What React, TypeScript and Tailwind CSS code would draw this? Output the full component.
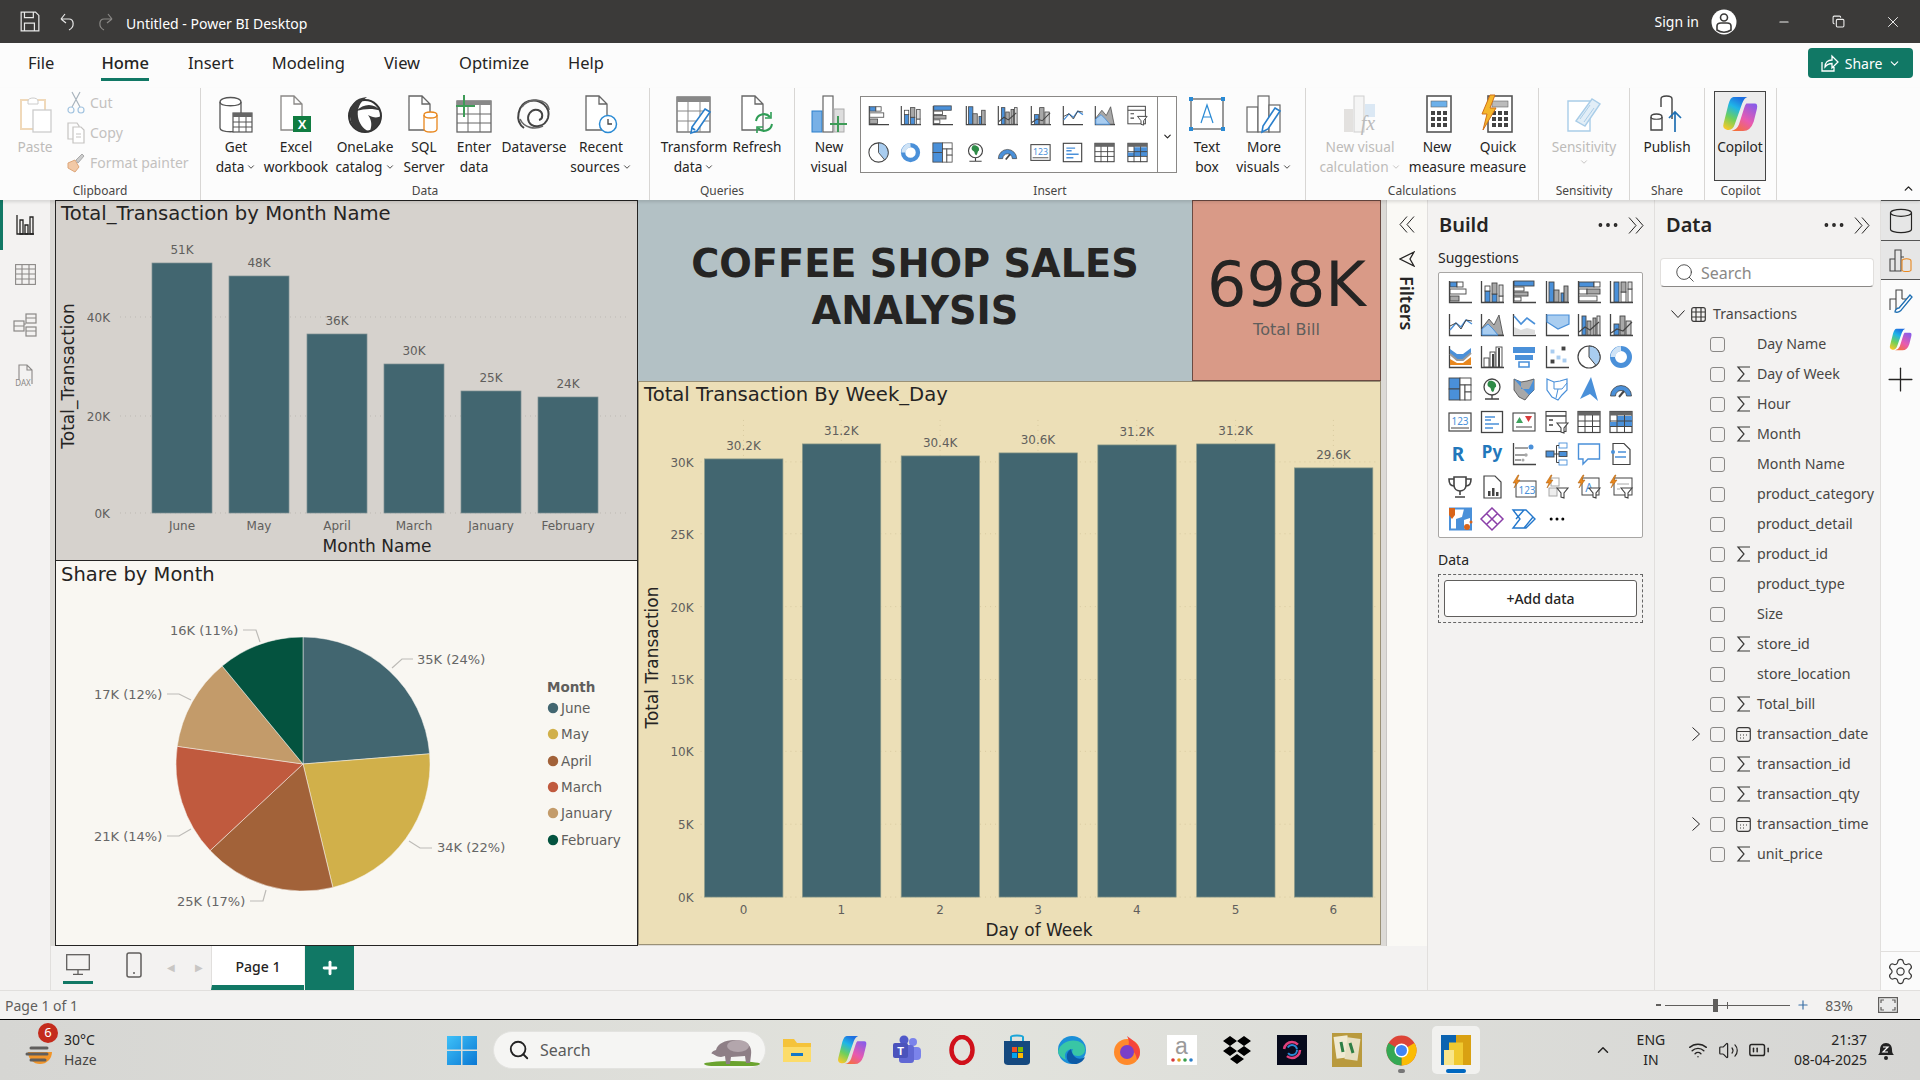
import React from 'react';
import { ChevronDown, ChevronUp, Search, Settings, Plus, Minus, Wifi, Volume2, BatteryMedium, X, Copy as CopyIcon, MoreHorizontal, Cylinder } from 'lucide-react';

const BL = '#4a90d9';
const LB = '#a9cdf0';
const DK = '#444444';
const GR = '#a8a8a8';
const OR = '#e8871e';

type P = { children?: React.ReactNode; w?: number; h?: number; vb?: string; className?: string };
function Ic({ children, w = 36, h = 38, vb, className }: P) {
  return (
    <svg width={w} height={h} viewBox={vb ?? `0 0 ${w} ${h}`} fill="none" className={`overflow-visible ${className ?? ''}`}>
      {children}
    </svg>
  );
}

const r = (x: number, y: number, w: number, h: number, f: string = BL, s: string = DK) => (
  <rect x={x} y={y} width={w} height={h} fill={f} stroke={s} strokeWidth=".9" />
);
const ax = <path d="M1.5 1v21.5H24" stroke={DK} strokeWidth="1.3" />;
const bolt = <path d="M6 0 1 8h3L2 13l6-8H5l2-5z" fill={OR} stroke="#a85f10" strokeWidth=".5" />;
const funnel = <path d="M12 13h11l-4 5v5l-3-1v-4z" fill="#fff" stroke={DK} strokeWidth="1.1" />;

const stBar = <>{ax}{r(2, 2, 7, 5)}{r(9, 2, 6, 5, '#fff')}{r(2, 9, 16, 5, '#fff')}{r(2, 16, 9, 5, GR)}</>;
const stCol = <>{ax}{r(5, 11, 5, 11)}{r(5, 6, 5, 5, '#fff')}{r(12, 14, 5, 8)}{r(12, 3, 5, 11, GR)}{r(19, 16, 4, 6, '#fff')}{r(19, 5, 4, 11, '#ddd')}</>;
const clBar = <>{ax}{r(2, 1, 20, 5)}{r(2, 7, 10, 4, '#fff')}{r(2, 12, 14, 4, GR)}{r(2, 17, 7, 4, '#fff')}</>;
const clCol = <>{ax}{r(4, 2, 5, 20)}{r(9, 10, 5, 12, GR)}{r(16, 13, 3, 9)}{r(19, 6, 4, 16, GR)}</>;
const pcBar = <>{ax}{r(2, 2, 15, 5)}{r(17, 2, 6, 5, '#fff')}{r(2, 9, 8, 5, '#fff')}{r(10, 9, 13, 5, GR)}{r(2, 16, 18, 5, '#fff')}</>;
const pcCol = <>{ax}{r(5, 2, 5, 20)}{r(12, 12, 5, 10, '#fff')}{r(12, 2, 5, 10, GR)}{r(19, 9, 4, 13, '#fff')}{r(19, 2, 4, 7, '#ddd')}</>;
const line = <>{ax}<path d="M2 17l6-7 5 4 5-7 6 4" stroke={BL} strokeWidth="1.4" /><path d="M2 13l6-3 5 6 5-9 6 1" stroke={DK} strokeWidth="1" /></>;
const area = <>{ax}<path d="M2 22V15l7-9 5 6 5-10 4 20z" fill={GR} stroke={DK} strokeWidth=".8" /><path d="M2 22V16l6-5 5 5 5 6z" fill={LB} stroke={BL} strokeWidth="1" /></>;
const stArea = <>{ax}<path d="M2 22V4l7 8 6-6 8 7v9z" fill="#fff" /><path d="M2 3l7 8 6-6 8 6" stroke={BL} strokeWidth="1.6" /><path d="M2 22V14l7 3 6-2 8 2v5z" fill="#ddd" /></>;
const pcArea = <>{ax}<path d="M2 2h22v9l-11 5-11-7z" fill={LB} stroke={BL} strokeWidth="1.2" /></>;
const lineCol1 = <>{ax}{r(5, 3, 4, 19)}{r(10, 8, 4, 14, GR)}{r(16, 5, 3, 17, GR)}{r(20, 3, 3, 19, '#ddd')}<path d="M2 19l6-5 5 3 9-8" stroke={DK} strokeWidth="1.2" /></>;
const lineCol2 = <>{ax}{r(5, 11, 5, 11)}{r(11, 3, 5, 19, GR)}{r(17, 8, 5, 14, '#ccc')}<path d="M2 20l6-4 6 2 9-9" stroke={DK} strokeWidth="1.2" /></>;
const ribbon = <>{ax}<path d="M2 4l7 5 6 0 8-6v5l-8 7H9L2 9z" fill={BL} /><path d="M2 14l7 4h6l8-6v8H2z" fill={OR} /><path d="M2 9l7 6h6l8-7" stroke="#999" strokeWidth="2" /></>;
const water = <>{ax}{r(4, 13, 5, 9, '#fff')}{r(10, 7, 5, 15, '#fff')}{r(16, 2, 6, 20, '#fff')}<rect x="18" y="3" width="2" height="19" fill={DK} /><rect x="12" y="9" width="2" height="13" fill={DK} /></>;
const funnelV = <><path d="M1 2h22v6H1z" fill={BL} /><path d="M3 10h18v5H3z" fill={BL} /><path d="M7 17h10v5H7z" fill="none" stroke={BL} strokeWidth="1.6" /></>;
const scatter = <>{ax}{r(6, 5, 3, 3, LB, LB)}{r(12, 11, 3, 3, LB, LB)}{r(6, 15, 3, 3, DK, DK)}{r(17, 2, 3, 3, DK, DK)}{r(18, 14, 3, 3, LB, LB)}</>;
const pie = <><circle cx="12" cy="12" r="11" fill="#fff" stroke={DK} strokeWidth="1.2" /><path d="M12 12V1a11 11 0 0 1 7 19.5z" fill={LB} stroke={DK} strokeWidth="1" /></>;
const donut = <><circle cx="12" cy="12" r="8.5" stroke={BL} strokeWidth="5" /><path d="M4 12a8.5 8.5 0 0 1 8-8.5" stroke="#cfe3f6" strokeWidth="5" /></>;
const tree = <>{r(1, 1, 11, 11)}{r(1, 12, 11, 11)}{r(12, 1, 11, 7, '#fff')}{r(12, 8, 5, 15, '#fff')}{r(17, 8, 6, 7, '#fff')}{r(17, 15, 6, 8, '#fff')}</>;
const globe = <><circle cx="12" cy="10" r="8" fill="#fff" stroke={DK} strokeWidth="1.3" /><path d="M9 4c4-1 8 2 7 6-2 0-1 3-3 5-3-1-1-4-4-5-2-1-2-4 0-6z" fill="#2e8b47" /><path d="M5 22h14M12 18v4" stroke={DK} strokeWidth="1.3" /></>;
const fmap = <><path d="M2 2l7 3 6-1 7-2v11l-5 5-4 5-6-3-5-7z" fill={GR} stroke={DK} strokeWidth=".8" /><path d="M2 2l7 3 0 7 8 0 5-10v11l-5 5-4-4-4-4z" fill={BL} /></>;
const smap = <><path d="M2 2l7 3 6-1 7-2v11l-5 5-4 5-6-3-5-7z" fill="#fff" stroke={BL} strokeWidth="1.2" /><path d="M9 5v7h8l5-6M11 21l2-9" stroke={BL} strokeWidth="1" /></>;
const nav = <path d="M14 0 3 22l10-5 8 7z" fill={BL} />;
const gauge = <><path d="M1.5 19a10.5 10.5 0 0 1 21 0h-5a5.5 5.5 0 0 0-11 0z" fill={BL} stroke={DK} strokeWidth=".8" /><path d="M10 20l5-6" stroke={DK} strokeWidth="2" /></>;
const card = <><rect x="1" y="3" width="22" height="18" fill="#fff" stroke={DK} strokeWidth="1.2" /><path d="M3 18h18" stroke={DK} /><text x="12" y="15" textAnchor="middle" fontSize="10" fill={BL} fontFamily="Noto Sans">123</text></>;
const mcard = <><rect x="1.5" y="1.5" width="21" height="21" fill="#fff" stroke={DK} strokeWidth="1.3" /><path d="M5 7h10M5 10h6M5 14h14M5 18h8" stroke={BL} strokeWidth="1.6" /></>;
const kpi = <><rect x="1" y="3" width="22" height="18" fill="#fff" stroke={DK} strokeWidth="1.1" /><path d="M4 13l3.5-6 3.5 6z" fill="#3fa35e" /><path d="M13 6h7l-3.5 6z" fill="#d83b3b" /><path d="M4 17h16" stroke={DK} /></>;
const slicer = <><rect x="1" y="1.5" width="20" height="20" fill="#fff" stroke={DK} strokeWidth="1.1" /><path d="M1 6h20M4 10h4M4 15h4" stroke={DK} strokeWidth="1.3" />{funnel}</>;
const table = <><rect x="1" y="1.5" width="22" height="21" fill="#fff" stroke={DK} strokeWidth="1.2" /><rect x="1" y="1.5" width="22" height="4" fill="#666" /><path d="M1 11h22M1 16.5h22M8 5v18M15.5 5v18" stroke={DK} /></>;
const matrix = <><rect x="1" y="1.5" width="22" height="21" fill="#fff" stroke={DK} strokeWidth="1.2" /><rect x="1" y="1.5" width="22" height="4" fill="#666" /><rect x="8" y="6" width="15" height="10" fill={BL} /><rect x="1" y="12" width="7" height="5" fill={BL} /><path d="M1 11h22M1 16.5h22M8 5v18M15.5 5v18" stroke={DK} /></>;
const rIc = <text x="10" y="19" textAnchor="middle" fontSize="19" fontWeight="700" fill="#2277bb" fontFamily="Noto Sans">R</text>;
const py = <text x="12" y="16" textAnchor="middle" fontSize="17" fontWeight="700" fill="#2277bb" fontFamily="Noto Sans">Py</text>;
const decomp = <>{ax}<path d="M3 6h13M3 13h10M3 18h6" stroke={DK} strokeWidth="1.1" /><circle cx="19" cy="5" r="2.5" fill={BL} /><circle cx="14" cy="13" r="1.7" fill={GR} /><circle cx="11" cy="18" r="1.5" fill={GR} /></>;
const treeIc = <>{r(1, 9, 8, 6)}{r(14, 1, 8, 5, '#fff', BL)}{r(14, 9.5, 8, 5)}{r(14, 18, 8, 5, '#fff', BL)}<path d="M9 12h5M11.5 3.5v17M11.5 3.5H14M11.5 20.5H14" stroke={DK} /></>;
const speech = <path d="M1.5 2h21v15H11l-5 5v-5H1.5z" fill="#fff" stroke={BL} strokeWidth="1.4" />;
const docB = <><path d="M4 1.5h11l6 6v15H4z" fill="#fff" stroke={DK} strokeWidth="1.2" /><circle cx="4" cy="10" r="2" fill={BL} /><path d="M9 10h8M6 15h11" stroke={BL} strokeWidth="1.3" /></>;
const trophy = <><path d="M6 2h12v8c0 4-3 6-6 6s-6-2-6-6z" fill="#fff" stroke={DK} strokeWidth="1.6" /><path d="M6 4H1c0 5 2 7 5 7M18 4h5c0 5-2 7-5 7M12 16v4M7 22h10" stroke={DK} strokeWidth="1.6" /></>;
const pag = <><path d="M4 1h11l6 6v16H4z" fill="#fff" stroke={DK} strokeWidth="1.2" /><rect x="8" y="16" width="2.5" height="5" fill={DK} /><rect x="12" y="13" width="2.5" height="8" fill={DK} /><rect x="16" y="17" width="2.5" height="4" fill={DK} /></>;
const boltCard = <><rect x="4" y="6" width="20" height="16" fill="#fff" stroke={DK} /><text x="15" y="19" textAnchor="middle" fontSize="10" fill={BL} fontFamily="Noto Sans">123</text>{bolt}</>;
const boltF = <><rect x="6" y="3" width="8" height="8" fill="#fff" stroke={GR} /><rect x="4" y="13" width="8" height="8" fill="#eee" stroke={GR} />{bolt}{funnel}</>;
const boltA = <><rect x="5" y="3" width="17" height="17" fill="#fff" stroke={DK} /><text x="12" y="17" textAnchor="middle" fontSize="12" fill={BL} fontFamily="Noto Sans">A</text>{bolt}{funnel}</>;
const boltS = <><rect x="5" y="3" width="18" height="17" fill="#fff" stroke={DK} /><path d="M8 9h12M8 14h3" stroke={GR} />{bolt}{funnel}</>;
const omap = <><rect x="2" y="1.5" width="21" height="21" fill="#fff" stroke={BL} strokeWidth="2" /><path d="M8 22V12l6-2 2-8h6v9l-6 2v9z" fill={BL} /><circle cx="19" cy="20" r="3" fill="#d8641a" /><circle cx="23" cy="15" r="1.5" fill="#d8641a" /><path d="M1 1h6v7l-3 4-3-4z" fill="#d8641a" /></>;
const diamond = <path d="M12 1l11 11-11 11L1 12zM12 1l5.5 5.5L6.5 17.500M12 1 6.500 6.500 17.500 17.500" stroke="#8a3fa8" strokeWidth="1.5" />;
const chev = <path d="M1 3h13l9 9-9 9H1l7-9zM12 3l-8 9M21 10l-9 11" stroke="#2277cc" strokeWidth="1.4" fill="#fff" />;

const suggest = [
  stBar, stCol, clBar, clCol, pcBar, pcCol,
  line, area, stArea, pcArea, lineCol1, lineCol2,
  ribbon, water, funnelV, scatter, pie, donut,
  tree, globe, fmap, smap, nav, gauge,
  card, mcard, kpi, slicer, table, matrix,
  rIc, py, decomp, treeIc, speech, docB,
  trophy, pag, boltCard, boltF, boltA, boltS,
  omap, diamond, chev,
];
const gallery = [stBar, stCol, clBar, clCol, lineCol1, lineCol2, line, area, slicer, pie, donut, tree, globe, gauge, card, mcard, table, matrix];

function CopilotMark({ id, size = 34 }: { id: string; size?: number }) {
  return (
    <svg width={size} height={size} viewBox="0 0 34 34">
      <defs>
        <linearGradient id={`${id}a`} x1=".6" y1="0" x2=".2" y2="1">
          <stop offset="0" stopColor="#1f6fe0" />
          <stop offset=".3" stopColor="#1fb5e8" />
          <stop offset=".65" stopColor="#6fd05a" />
          <stop offset="1" stopColor="#f8c82a" />
        </linearGradient>
        <linearGradient id={`${id}b`} x1=".8" y1="0" x2=".2" y2="1">
          <stop offset="0" stopColor="#8a5ce8" />
          <stop offset=".55" stopColor="#e85ab0" />
          <stop offset="1" stopColor="#f5703a" />
        </linearGradient>
      </defs>
      <path d="M11 1H24Q21 2 19 7L12 27Q10 33 5 32Q0 31 1.500 26L6 8Q8 1 11 1Z" fill={`url(#${id}a)`} />
      <path d="M23 7H31Q34 7 33 12L30 24Q27 33 20 33H9Q14 32 16 27L21 11Q22 8 23 7Z" fill={`url(#${id}b)`} />
    </svg>
  );
}

const docPath = 'M3 1h13l8 8v26H3z M16 1v8h8';

function GetDataIc() {
  return (
    <Ic>
      <path d="M2 7c0-6 21-6 21 0v26c0 5-21 5-21 0z" fill="#fff" stroke="#555" strokeWidth="1.3" />
      <path d="M2 7c0 5 21 5 21 0" stroke="#555" strokeWidth="1.3" />
      <rect x="15" y="18" width="19" height="19" fill="#fff" stroke="#555" strokeWidth="1.2" />
      <rect x="15" y="18" width="19" height="4" fill="#666" />
      <path d="M15 27h19M15 32h19M21 22v15M28 22v15" stroke="#555" />
    </Ic>
  );
}
function ExcelIc() {
  return (
    <Ic>
      <path d={docPath} fill="#fff" stroke="#8a8886" strokeWidth="1.3" />
      <rect x="15" y="21" width="18" height="16" fill="#107c41" />
      <text x="24" y="34" textAnchor="middle" fontSize="13" fontWeight="700" fill="#fff" fontFamily="Liberation Sans">X</text>
    </Ic>
  );
}
function OneLakeIc() {
  return (
    <Ic>
      <circle cx="18" cy="21" r="16" fill="#fff" stroke="#333" strokeWidth="2" />
      <path d="M3 22C2 10 8 3 20 2c-8 6-10 12-9 20 1 6 5 12 10 14C10 38 4 32 3 22z" fill="#3a3a3a" />
      <path d="M9 16c8-8 18-8 25 0-9-3-16-2-25 0zM21 20c5 3 10 3 13 1-1 8-5 13-11 15 2-5 2-11-2-16z" fill="#3a3a3a" />
    </Ic>
  );
}
function SqlIc() {
  return (
    <Ic>
      <path d={docPath} fill="#fff" stroke="#666" strokeWidth="1.3" />
      <path d="M18 20c0-4 13-4 13 0v14c0 4-13 4-13 0z" fill="#fff" stroke={OR} strokeWidth="1.3" />
      <path d="M18 20c0 4 13 4 13 0" stroke={OR} strokeWidth="1.3" />
    </Ic>
  );
}
function EnterIc() {
  return (
    <Ic>
      <rect x="1" y="6" width="34" height="31" fill="#fff" stroke="#666" strokeWidth="1.3" />
      <rect x="1" y="6" width="34" height="4" fill="#888" />
      <path d="M1 19h34M1 28h34M12 10v27M24 10v27" stroke="#666" />
      <path d="M8 0v22M0 11h19" stroke="#3e9b57" strokeWidth="2" />
    </Ic>
  );
}
function DataverseIc() {
  return (
    <Ic>
      <path d="M8 33C-2 26 2 9 13 6c12-3 22 7 19 17-3 9-15 11-19 4-3-6 2-14 9-12 6 2 5 9 1 10" stroke="#444" strokeWidth="2" />
      <path d="M6 12C13 2 32 3 33 15M4 24c4 9 15 11 23 7" stroke="#666" strokeWidth="1.6" />
    </Ic>
  );
}
function RecentIc() {
  return (
    <Ic>
      <path d={docPath} fill="#fff" stroke="#666" strokeWidth="1.3" />
      <circle cx="25" cy="29" r="8.5" fill="#fff" stroke="#2a8ad4" strokeWidth="1.5" />
      <path d="M25 24v5h4" stroke="#444" strokeWidth="1.3" />
    </Ic>
  );
}
function TransformIc() {
  return (
    <Ic>
      <rect x="1" y="2" width="33" height="35" fill="#fff" stroke="#666" strokeWidth="1.3" />
      <rect x="1" y="2" width="33" height="5" fill="#888" />
      <path d="M1 16h33M1 26h33M12 7v30M24 7v30" stroke="#888" />
      <path d="M29 14l5 3-13 19-6 2 1-6z" fill="#fff" stroke="#2a7fcb" strokeWidth="1.6" />
      <path d="M16 33l3 2" stroke="#2a7fcb" strokeWidth="2" />
    </Ic>
  );
}
function RefreshIc() {
  return (
    <Ic>
      <path d={docPath} fill="#fff" stroke="#666" strokeWidth="1.3" />
      <path d="M17 26a8 8 0 0 1 14-4M33 29a8 8 0 0 1-14 4" stroke="#2f9d55" strokeWidth="2" fill="none" />
      <path d="M32 17v6h-6M18 38v-6h6" stroke="#2f9d55" strokeWidth="1.6" fill="none" />
    </Ic>
  );
}
function NewVisualIc() {
  return (
    <Ic>
      <rect x="1" y="16" width="10" height="21" fill="#78b0e6" stroke="#2a7fcb" />
      <rect x="12" y="1" width="10" height="36" fill="#fff" stroke="#666" strokeWidth="1.2" />
      <rect x="23" y="14" width="10" height="23" fill="#ddd" stroke="#aaa" />
      <path d="M27 21v16M19 29h17" stroke="#3e9b57" strokeWidth="2" />
    </Ic>
  );
}
function TextBoxIc() {
  return (
    <Ic>
      <rect x="2" y="4" width="32" height="30" fill="#fff" stroke="#555" strokeWidth="1.2" />
      {[[0, 2], [32, 2], [0, 32], [32, 32]].map(([x, y]) => (
        <rect key={`${x}${y}`} x={x} y={y} width="4" height="4" fill="#2a8ad4" />
      ))}
      <path d="M12 28 18 10l6 18M14 22h8" stroke="#2a8ad4" strokeWidth="1.2" />
    </Ic>
  );
}
function MoreVisualsIc() {
  return (
    <Ic>
      <rect x="1" y="12" width="11" height="25" fill="#fff" stroke="#666" strokeWidth="1.2" />
      <rect x="12" y="1" width="11" height="36" fill="#fff" stroke="#666" strokeWidth="1.2" />
      <rect x="23" y="10" width="11" height="27" fill="#fff" stroke="#666" strokeWidth="1.2" />
      <path d="M29 13l5 3-12 18-6 3 1-6z" fill="#fff" stroke="#2a7fcb" strokeWidth="1.6" />
    </Ic>
  );
}
function NewCalcIc() {
  return (
    <Ic>
      <rect x="2" y="14" width="9" height="23" fill="#e3e1df" />
      <rect x="12" y="1" width="10" height="36" fill="#f5f5f5" stroke="#cfcfcf" />
      <rect x="23" y="9" width="10" height="13" fill="#dbe8f4" />
      <text x="26" y="35" textAnchor="middle" fontSize="20" fontStyle="italic" fill="#bbb" fontFamily="Liberation Serif">fx</text>
    </Ic>
  );
}
function CalcIc({ bolted }: { bolted?: boolean }) {
  return (
    <Ic>
      <rect x="8" y="1" width="24" height="36" fill="#fff" stroke="#555" strokeWidth="1.6" />
      <rect x="12" y="6" width="16" height="6" fill={bolted ? '#bbb' : '#6cb0ea'} stroke="#666" strokeWidth=".6" />
      {[16, 22, 28].map((y) =>
        [12, 18, 24].map((x) => <rect key={`${x}${y}`} x={x} y={y} width="4" height="4" fill="#444" />),
      )}
      {bolted && <path d="M10 0 2 19h5L3 35l13-22h-6l5-13z" fill="#f5b72c" stroke="#d0701a" strokeWidth="1" />}
    </Ic>
  );
}
function SensitivityIc() {
  return (
    <Ic>
      <path d="M2 6h22v30H2z" fill="#fff" stroke="#a9cde8" strokeWidth="1.4" />
      <path d="M10 26 26 4l8 5-15 22z" fill="#e2eef7" stroke="#a9cde8" strokeWidth="1.4" />
      <path d="M14 24l10-14M18 27l10-14" stroke="#a9cde8" />
    </Ic>
  );
}
function PublishIc() {
  return (
    <Ic>
      <path d="M12 12V4c0-4 11-4 11 0v20M2 22c0-4 11-4 11 0v13H2z" fill="#fff" stroke="#444" strokeWidth="1.4" />
      <path d="M2 22c0 3 11 3 11 0" stroke="#444" strokeWidth="1.2" />
      <path d="M26 37V17M20 23l6-6 6 6" stroke="#1f6fb2" strokeWidth="1.7" />
    </Ic>
  );
}

function RBtn({ w, icon, l1, l2, caret, muted }: { w: string; icon: React.ReactNode; l1: string; l2?: string; caret?: boolean; muted?: boolean }) {
  return (
    <div className={`${w} flex flex-col items-center pt-[7px] ${muted ? 'text-[#bdbbb9]' : 'text-[#252423]'}`}>
      <div className="h-[38px] mb-[4px] flex justify-center">{icon}</div>
      <div className="text-[13.7px] leading-[20px] whitespace-nowrap">{l1}</div>
      <div className="text-[13.7px] leading-[20px] whitespace-nowrap flex items-center gap-[2px]">
        {l2}
        {caret && <ChevronDown size={10} strokeWidth={2} />}
      </div>
    </div>
  );
}

function Group({ w, label, pl, children }: { w: string; label: string; pl?: string; children: React.ReactNode }) {
  return (
    <div className={`${w} h-full flex flex-col border-r border-[#d8d6d4]`}>
      <div className={`${pl ?? ''} flex h-[95px]`}>{children}</div>
      <div className="text-[12px] leading-[16px] text-center text-[#484644]">{label}</div>
    </div>
  );
}

function Chevs({ left }: { left?: boolean }) {
  return (
    <svg width="16" height="17" viewBox="0 0 16 17" fill="none" stroke="#252423" strokeWidth="1">
      <path d={left ? 'M8 .5 1 8.500l7 8M15 .5l-7 8 7 8' : 'M1 .5l7 8-7 8M8 .5l7 8-7 8'} />
    </svg>
  );
}

function TitleBar() {
  return (
    <div className="h-[43px] bg-[#3b3a39] flex items-center text-white">
      <svg width="20" height="21" viewBox="0 0 18 19" fill="none" className="ml-[20px]" stroke="#e8e8e8" strokeWidth="1.1">
        <path d="M1 1h13l3 3v14H1zM4 1v5h8V1M4 18v-7h9v7" />
      </svg>
      <svg width="20" height="22" viewBox="0 0 20 20" fill="none" className="ml-[18px]" stroke="#e8e8e8" strokeWidth="1.2">
        <path d="M3 7h8c5 0 6 8 0 11M3 7l4-5M3 7l5 4" />
      </svg>
      <svg width="20" height="22" viewBox="0 0 20 20" fill="none" className="ml-[17px]" stroke="#8a8886" strokeWidth="1.2">
        <path d="M17 7H9c-5 0-6 8 0 11M17 7l-4-5M17 7l-5 4" />
      </svg>
      <div className="ml-[11px] mt-[4px] text-[14px] whitespace-nowrap">Untitled - Power BI Desktop</div>
      <div className="ml-auto text-[14px]">Sign in</div>
      <svg width="26" height="26" viewBox="0 0 26 26" className="ml-[12px]">
        <circle cx="13" cy="13" r="12.500" fill="#fff" />
        <circle cx="13" cy="8.500" r="3.500" fill="none" stroke="#3b3a39" strokeWidth="1.600" />
        <path d="M6 21v-4c0-2 2-3 4-3h6c2 0 4 1 4 3v4c-4 3-10 3-14 0z" fill="none" stroke="#3b3a39" strokeWidth="1.600" />
      </svg>
      <Minus size={14} className="ml-[40px] text-[#eee]" />
      <CopyIcon size={13} className="ml-[41px] text-[#eee]" />
      <X size={18} strokeWidth={1.3} className="ml-[39px] mr-[18px] text-[#eee]" />
    </div>
  );
}

function Tabs() {
  return (
    <div className="h-[45px] bg-[#fcfcfc] flex items-start pl-[28px] gap-[39px] text-[16.5px] text-[#252423]">
      <div className="h-[38px] pt-[6px] leading-[27px]">File</div>
      <div className="h-[38px] pt-[6px] leading-[27px] ml-[8px] font-medium border-b-[3px] border-[#117865]">Home</div>
      <div className="h-[38px] pt-[6px] leading-[27px]">Insert</div>
      <div className="h-[38px] pt-[6px] leading-[27px] ml-[-1px]">Modeling</div>
      <div className="h-[38px] pt-[6px] leading-[27px]">View</div>
      <div className="h-[38px] pt-[6px] leading-[27px]">Optimize</div>
      <div className="h-[38px] pt-[6px] leading-[27px]">Help</div>
      <div className="ml-auto mr-[7px] mt-[5px] w-[105px] h-[30px] rounded-[4px] bg-[#117865] text-white text-[14px] flex items-center justify-center gap-[6px]">
        <svg width="19" height="19" viewBox="0 0 19 19" fill="none" stroke="#fff" strokeWidth="1.3">
          <path d="M2 8v9h12v-4M5 13c0-5 3-7 7-7V2l6 6-6 6V9.500c-3 0-5 1-7 3.500z" />
        </svg>
        Share
        <ChevronDown size={13} />
      </div>
    </div>
  );
}

function Ribbon() {
  return (
    <div className="h-[112px] bg-[#fcfcfc] flex text-[#252423] shadow-[0_2px_3px_rgba(0,0,0,0.12)] relative z-10">
      <Group w="w-[201px]" label="Clipboard" pl="pl-[13px]">
        <RBtn
          w="w-[44px]"
          muted
          l1="Paste"
          icon={
            <Ic>
              <path d="M4 5h24v29H4z" fill="#fff" stroke="#f0d9ba" strokeWidth="2" />
              <path d="M11 6c0-4 10-4 10 0v3H11z" fill="#fff" stroke="#ccc" />
              <rect x="16" y="15" width="18" height="22" fill="#fff" stroke="#ccc" strokeWidth="1.3" />
            </Ic>
          }
        />
        <div className="ml-[10px] flex flex-col text-[14px] text-[#c3c1bf] leading-[30px]">
          <div className="flex items-center gap-[5px]">
            <svg width="18" height="24" viewBox="0 0 18 24" fill="none" stroke="#a9b4bd" strokeWidth="1.2">
              <path d="M5 1l8 15M13 1 5 16" />
              <circle cx="4" cy="19" r="3" stroke="#a3c4e0" />
              <circle cx="14" cy="19" r="3" stroke="#a3c4e0" />
            </svg>
            Cut
          </div>
          <div className="flex items-center gap-[5px]">
            <svg width="18" height="22" viewBox="0 0 18 22" fill="none" stroke="#c5c3c1" strokeWidth="1.2">
              <path d="M1 1h9l2 3v13H1z" />
              <path d="M6 5h8l3 3v13H6z" fill="#fff" />
              <path d="M9 12h5M9 15h5" />
            </svg>
            Copy
          </div>
          <div className="flex items-center gap-[5px]">
            <svg width="18" height="20" viewBox="0 0 18 20" fill="none">
              <path d="M1 10l7-3 4 7-4 5-7-4z" fill="#f2c9a6" stroke="#dda67a" />
              <path d="M9 7l6-6 2 2-6 7z" fill="#ccc" stroke="#aaa" />
            </svg>
            Format painter
          </div>
        </div>
      </Group>
      <Group w="w-[449px]" label="Data" pl="pl-[10px]">
        <RBtn w="w-[50px]" icon={<GetDataIc />} l1="Get" l2="data" caret />
        <RBtn w="w-[70px]" icon={<ExcelIc />} l1="Excel" l2="workbook" />
        <RBtn w="w-[68px]" icon={<OneLakeIc />} l1="OneLake" l2="catalog" caret />
        <RBtn w="w-[50px]" icon={<SqlIc />} l1="SQL" l2="Server" />
        <RBtn w="w-[50px]" icon={<EnterIc />} l1="Enter" l2="data" />
        <RBtn w="w-[70px]" icon={<DataverseIc />} l1="Dataverse" />
        <RBtn w="w-[64px]" icon={<RecentIc />} l1="Recent" l2="sources" caret />
      </Group>
      <Group w="w-[145px]" label="Queries" pl="pl-[9px]">
        <RBtn w="w-[70px]" icon={<TransformIc />} l1="Transform" l2="data" caret />
        <RBtn w="w-[56px]" icon={<RefreshIc />} l1="Refresh" />
      </Group>
      <Group w="w-[511px]" label="Insert" pl="pl-[9px]">
        <RBtn w="w-[50px]" icon={<NewVisualIc />} l1="New" l2="visual" />
        <div className="ml-[6px] mt-[8px] w-[317px] h-[77px] border border-[#8a8886] bg-white flex">
          <div className="w-[296px] pl-[1px] grid grid-cols-[repeat(9,32.4px)] grid-rows-[37px_37px]">
            {gallery.map((g, i) => (
              <div key={i} className="flex items-center justify-center">
                <Ic w={21} h={21} vb="0 0 24 24">{g}</Ic>
              </div>
            ))}
          </div>
          <div className="flex-1 border-l border-[#8a8886] flex items-center justify-center pt-[4px]">
            <ChevronDown size={11} strokeWidth={2.500} />
          </div>
        </div>
        <RBtn w="w-[48px] ml-[6px]" icon={<TextBoxIc />} l1="Text" l2="box" />
        <RBtn w="w-[66px]" icon={<MoreVisualsIc />} l1="More" l2="visuals" caret />
      </Group>
      <Group w="w-[233px]" label="Calculations" pl="pl-[5px]">
        <RBtn w="w-[98px]" muted icon={<NewCalcIc />} l1="New visual" l2="calculation" caret />
        <RBtn w="w-[56px]" icon={<CalcIc />} l1="New" l2="measure" />
        <RBtn w="w-[66px]" icon={<CalcIc bolted />} l1="Quick" l2="measure" />
      </Group>
      <Group w="w-[91px]" label="Sensitivity">
        <RBtn w="w-[90px]" muted icon={<SensitivityIc />} l1="Sensitivity" caret />
      </Group>
      <Group w="w-[75px]" label="Share">
        <RBtn w="w-[74px]" icon={<PublishIc />} l1="Publish" />
      </Group>
      <Group w="w-[72px]" label="Copilot" pl="pl-[9px]">
        <div className="mt-[3px] w-[52px] h-[90px] bg-[#ececec] border border-[#444] flex flex-col items-center pt-[4px] text-[13.7px]">
          <CopilotMark id="cpl" size={36} />
          <div className="mt-[5px] leading-[20px]">Copilot</div>
        </div>
      </Group>
      <div className="flex-1 flex items-end justify-end pr-[5px] pb-[5px]">
        <ChevronUp size={13} strokeWidth={2.500} />
      </div>
    </div>
  );
}

function LeftRail() {
  return (
    <div className="w-[50px] bg-[#f3f2f1] flex flex-col items-stretch">
      <div className="h-[50px] border-l-[3px] border-[#117865] flex items-center justify-center pr-[3px]">
        <svg width="18" height="20" viewBox="0 0 18 20" fill="none" stroke="#252423" strokeWidth="1.3">
          <path d="M1 0v19h17" />
          <path d="M4 5h3v14H4zM9 10h3v9H9zM14 2h3v17h-3z" />
        </svg>
      </div>
      <div className="h-[49px] flex items-center justify-center">
        <svg width="21" height="21" viewBox="0 0 21 21" fill="none" stroke="#8a8886" strokeWidth="1.100">
          <rect x=".6" y=".6" width="19.800" height="19.800" />
          <path d="M1 5h19M1 10h19M1 15h19M7 1v19M14 1v19" />
        </svg>
      </div>
      <div className="h-[51px] flex items-center justify-center">
        <svg width="24" height="24" viewBox="0 0 24 24" fill="none" stroke="#8a8886" strokeWidth="1.200">
          <rect x="1" y="8" width="10" height="10" />
          <rect x="13" y="1" width="10" height="9" />
          <rect x="13" y="14" width="10" height="9" />
          <path d="M1 13h10M13 5h10M13 18h10M11 11h2" />
        </svg>
      </div>
      <div className="h-[51px] flex items-center justify-center">
        <svg width="24" height="24" viewBox="0 0 24 24" fill="none" stroke="#8a8886" strokeWidth="1.100">
          <path d="M6 16V1h8l5 5v14M14 1v5h5" />
          <text x="10" y="22" textAnchor="middle" fontSize="8" fill="#8a8886" stroke="none" fontFamily="Noto Sans">DAX</text>
        </svg>
      </div>
    </div>
  );
}

const vt = "font-['DejaVu_Sans',sans-serif]";

function Chart1() {
  const bars = [
    ['June', 152, 263, '51K'],
    ['May', 229, 276, '48K'],
    ['April', 307, 334, '36K'],
    ['March', 384, 364, '30K'],
    ['January', 461, 391, '25K'],
    ['February', 538, 397, '24K'],
  ] as const;
  return (
    <div className="h-[361px] bg-[#d6d2cd] border border-[#252423] flex flex-col overflow-hidden">
      <div className={`${vt} text-[19.6px] leading-[24px] text-[#252423] pl-[5px] pt-[1px]`}>Total_Transaction by Month Name</div>
      <svg width="581" height="334" viewBox="56 226 581 334" className={vt}>
        {[317, 416, 513].map((y) => (
          <line key={y} x1="120" x2="630" y1={y} y2={y} stroke="#bdb9b3" strokeDasharray="1 4" />
        ))}
        {[['40K', 317], ['20K', 416], ['0K', 513]].map(([t, y]) => (
          <text key={t} x="110" y={(y as number) + 1} textAnchor="end" dominantBaseline="central" fontSize="12" fill="#605e5c">{t}</text>
        ))}
        {bars.map(([name, x, top, val]) => (
          <g key={name}>
            <rect x={x} y={top} width="60" height={513 - top} fill="#426670" stroke="#7d8f92" strokeWidth=".7" />
            <text x={x + 30} y={top - 13} textAnchor="middle" dominantBaseline="central" fontSize="12" fill="#605e5c">{val}</text>
            <text x={x + 30} y="526" textAnchor="middle" dominantBaseline="central" fontSize="12" fill="#605e5c">{name}</text>
          </g>
        ))}
        <text x="377" y="546" textAnchor="middle" dominantBaseline="central" fontSize="17" fill="#252423">Month Name</text>
        <text transform="translate(68 376) rotate(-90)" textAnchor="middle" dominantBaseline="central" fontSize="17" fill="#252423">Total_Transaction</text>
      </svg>
    </div>
  );
}

function slice(a0: number, a1: number) {
  const [cx, cy, R] = [303, 764, 127];
  const pt = (a: number) => `${cx + R * Math.sin((a * Math.PI) / 180)} ${cy - R * Math.cos((a * Math.PI) / 180)}`;
  return `M${cx} ${cy}L${pt(a0)}A${R} ${R} 0 ${a1 - a0 > 180 ? 1 : 0} 1 ${pt(a1)}Z`;
}

function Chart2() {
  const cuts = [0, 85.4, 166.4, 227, 278, 320.5, 360];
  const cols = ['#426670', '#d1b04a', '#a26239', '#c05a3e', '#c39b6a', '#04533f'];
  const labels = [
    ['35K (24%)', 417, 659, 'M392 668l10-9h11'],
    ['34K (22%)', 437, 847, 'M409 841l11 7h12'],
    ['25K (17%)', 177, 901, 'M266 890l-3 11h-13'],
    ['21K (14%)', 94, 836, 'M191 829l-12 7h-12'],
    ['17K (12%)', 94, 694, 'M191 700l-12-6h-12'],
    ['16K (11%)', 170, 630, 'M260 642l-4-12h-13'],
  ] as const;
  const legend = [['June', 708], ['May', 734], ['April', 761], ['March', 787], ['January', 813], ['February', 840]] as const;
  return (
    <div className="h-[385px] bg-[#f9f7f2] border border-[#252423] border-t-0 flex flex-col overflow-hidden">
      <div className={`${vt} text-[19.5px] leading-[24px] text-[#252423] pl-[5px] pt-[2px]`}>Share by Month</div>
      <svg width="581" height="358" viewBox="56 587 581 358" className={vt}>
        {cols.map((c, i) => (
          <path key={c} d={slice(cuts[i], cuts[i + 1])} fill={c} stroke="#f9f7f2" strokeWidth=".5" />
        ))}
        {labels.map(([t, x, y, d]) => (
          <g key={t}>
            <path d={d} fill="none" stroke="#bdbbb7" strokeWidth="1.200" />
            <text x={x} y={y} dominantBaseline="central" fontSize="13" fill="#666">{t}</text>
          </g>
        ))}
        <text x="547" y="687" dominantBaseline="central" fontSize="13.500" fontWeight="700" fill="#605e5c">Month</text>
        {legend.map(([t, y], i) => (
          <g key={t}>
            <circle cx="553" cy={y} r="5.200" fill={cols[i]} />
            <text x="561" y={y} dominantBaseline="central" fontSize="13.500" fill="#605e5c">{t}</text>
          </g>
        ))}
      </svg>
    </div>
  );
}

function Chart3() {
  const bars = [
    [704, 459, '30.2K'],
    [802, 444, '31.2K'],
    [901, 456, '30.4K'],
    [999, 453, '30.6K'],
    [1098, 445, '31.2K'],
    [1197, 444, '31.2K'],
    [1295, 468, '29.6K'],
  ] as const;
  const ticks = [['30K', 462], ['25K', 534], ['20K', 607], ['15K', 680], ['10K', 752], ['5K', 825], ['0K', 898]] as const;
  return (
    <div className="h-[564px] bg-[#ecdfb7] border border-[#9a9176] flex flex-col overflow-hidden">
      <div className={`${vt} text-[19.6px] leading-[24px] text-[#252423] pl-[5px] pt-[1px]`}>Total Transaction By Week_Day</div>
      <svg width="741" height="538" viewBox="639 407 741 538" className={vt}>
        {ticks.map(([t, y]) => (
          <g key={t}>
            <line x1="700" x2="1378" y1={y} y2={y} stroke="#d8caa0" strokeDasharray="1 4" />
            <text x="693" y={y + 1} textAnchor="end" dominantBaseline="central" fontSize="12" fill="#605e5c">{t}</text>
          </g>
        ))}
        {bars.map(([x, top, v], i) => (
          <g key={x}>
            <line x1={x + 39} x2={x + 39} y1="420" y2="898" stroke="#d8caa0" strokeDasharray="1 4" />
            <rect x={x} y={top} width="78.500" height={898 - top} fill="#426670" stroke="#8c9a8a" strokeWidth=".7" />
            <text x={x + 39} y={top - 13} textAnchor="middle" dominantBaseline="central" fontSize="12" fill="#605e5c">{v}</text>
            <text x={x + 39} y="911" textAnchor="middle" dominantBaseline="central" fontSize="12" fill="#605e5c">{i}</text>
          </g>
        ))}
        <text x="1039" y="931" textAnchor="middle" dominantBaseline="central" fontSize="17" fill="#252423">Day of Week</text>
        <text transform="translate(651 658) rotate(-90)" textAnchor="middle" dominantBaseline="central" fontSize="17" fill="#252423">Total Transaction</text>
      </svg>
    </div>
  );
}

function Canvas() {
  return (
    <div className="w-[1326px] flex">
      <div className="w-[583px] flex flex-col">
        <Chart1 />
        <Chart2 />
      </div>
      <div className="w-[743px] flex flex-col">
        <div className="h-[181px] flex">
          <div className={`${vt} w-[554px] bg-[#b3c1c5] flex items-center justify-center text-center font-bold text-[38.3px] leading-[47px] text-[#252423] pb-[8px]`}>
            <div>
              COFFEE SHOP SALES
              <br />
              ANALYSIS
            </div>
          </div>
          <div className={`${vt} w-[189px] bg-[#d99a87] border border-[#6b4a42] flex flex-col items-center pt-[48px]`}>
            <div className="text-[62px] leading-[72px] text-[#252423]">698K</div>
            <div className="text-[16px] leading-[20px] mt-[-1px] text-[#605e5c]">Total Bill</div>
          </div>
        </div>
        <Chart3 />
      </div>
    </div>
  );
}

function PageTabs() {
  return (
    <div className="h-[44px] bg-[#f3f2f1] flex border-l border-[#e1dfdd]">
      <div className="w-[31px] ml-[11px] flex flex-col items-center pt-[8px] relative">
        <svg width="24" height="21" viewBox="0 0 24 21" fill="none" stroke="#605e5c" strokeWidth="1.300">
          <rect x=".7" y=".7" width="22.600" height="15" />
          <path d="M12 16v4M7 20.400h10" />
        </svg>
        <div className="absolute bottom-[6px] h-[3px] w-[30px] bg-[#117865]" />
      </div>
      <svg width="16" height="26" viewBox="0 0 16 26" fill="none" stroke="#605e5c" strokeWidth="1.500" className="ml-[33px] mt-[6px]">
        <rect x="1" y="1" width="14" height="24" rx="2" />
        <path d="M7 21h2" />
      </svg>
      <div className="ml-[25px] flex items-center gap-[20px] text-[#c8c6c4] text-[10px] pb-[2px]">
        <span>◀</span>
        <span>▶</span>
      </div>
      <div className="ml-[8px] w-[93px] bg-white border-l border-[#e1dfdd] border-b-[5px] border-b-[#117865] pt-[2px] flex items-center justify-center text-[14px] font-medium text-[#252423]">
        Page 1
      </div>
      <div className="ml-[1px] w-[49px] bg-[#117865] flex items-center justify-center">
        <Plus size={20} strokeWidth={3.500} className="text-white" />
      </div>
    </div>
  );
}

function Panel({ title, w, children }: { title: string; w: string; children: React.ReactNode }) {
  return (
    <div className={`${w} bg-[#f3f2f1] border-l border-[#e1dfdd] flex flex-col`}>
      <div className="h-[50px] flex items-center pl-[11px] pr-[10px] text-[20px] font-semibold text-[#252423]">
        {title}
        <MoreHorizontal size={26} strokeWidth={1.500} className="ml-auto" />
        <div className="ml-[7px]"><Chevs /></div>
      </div>
      {children}
    </div>
  );
}

function Build() {
  return (
    <Panel title="Build" w="w-[227px]">
      <div className="pl-[10px] text-[14px] leading-[20px] text-[#252423] mt-[-2px]">Suggestions</div>
      <div className="ml-[10px] mt-[4px] w-[205px] h-[266px] bg-white border border-[#a8a6a4] rounded-[2px] pl-[5px] pt-[3px] grid grid-cols-[repeat(6,32.2px)] auto-rows-[32.4px]">
        {suggest.map((g, i) => (
          <div key={i} className="flex items-center justify-center">
            <Ic w={24} h={24}>{g}</Ic>
          </div>
        ))}
        <div className="flex items-center justify-center">
          <MoreHorizontal size={20} strokeWidth={1.600} />
        </div>
      </div>
      <div className="pl-[10px] mt-[12px] text-[14px] leading-[20px] text-[#252423]">Data</div>
      <div className="ml-[10px] mt-[4px] w-[205px] h-[49px] border border-dashed border-[#666] p-[5px]">
        <div className="h-full bg-white border border-[#605e5c] rounded-[3px] flex items-center justify-center text-[14px] font-medium text-[#252423]">
          +Add data
        </div>
      </div>
    </Panel>
  );
}

const fields: [string, '' | 's' | 'c', boolean?][] = [
  ['Day Name', ''],
  ['Day of Week', 's'],
  ['Hour', 's'],
  ['Month', 's'],
  ['Month Name', ''],
  ['product_category', ''],
  ['product_detail', ''],
  ['product_id', 's'],
  ['product_type', ''],
  ['Size', ''],
  ['store_id', 's'],
  ['store_location', ''],
  ['Total_bill', 's'],
  ['transaction_date', 'c', true],
  ['transaction_id', 's'],
  ['transaction_qty', 's'],
  ['transaction_time', 'c', true],
  ['unit_price', 's'],
];

function FieldIcon({ k }: { k: '' | 's' | 'c' }) {
  if (k === 's')
    return (
      <svg width="15" height="16" viewBox="0 0 15 16" fill="none" stroke="#3b3a39" strokeWidth="1.200">
        <path d="M14 1H2l6 7-6 7h12" />
      </svg>
    );
  if (k === 'c')
    return (
      <svg width="15" height="15" viewBox="0 0 15 15" fill="none" stroke="#3b3a39" strokeWidth="1.200">
        <rect x=".7" y=".7" width="13.600" height="13.600" rx="2.500" />
        <path d="M1 4.500h13M4 8h1M7 8h1M10 8h1M4 11h1M7 11h1" />
      </svg>
    );
  return <div className="w-[15px]" />;
}

function DataPane() {
  return (
    <Panel title="Data" w="w-[226px]">
      <div className="ml-[5px] mt-[8px] w-[214px] h-[29px] bg-white border border-[#e1dfdd] border-b-[#8a8886] rounded-[4px] flex items-center pl-[13px] text-[16px] text-[#8a8886]">
        <Search size={22} strokeWidth={1} className="text-[#444] mr-[5px]" />
        Search
      </div>
      <div className="mt-[12px] h-[30px] flex items-center text-[14.2px] text-[#484644]">
        <svg width="14" height="8" viewBox="0 0 14 8" fill="none" stroke="#252423" className="ml-[16px]">
          <path d="M.5.5 7 7.500 13.500.5" />
        </svg>
        <svg width="15" height="15" viewBox="0 0 15 15" fill="none" stroke="#3b3a39" strokeWidth="1.200" className="ml-[6px]">
          <rect x=".7" y=".7" width="13.600" height="13.600" rx="2" />
          <path d="M1 5h13M1 10h13M5 1v13M10 1v13" />
        </svg>
        <span className="ml-[7px]">Transactions</span>
      </div>
      <div className="flex flex-col">
        {fields.map(([n, k, exp]) => (
          <div key={n} className="h-[30px] flex items-center text-[14.2px] leading-[20px] text-[#484644] whitespace-nowrap">
            <div className="w-[55px] flex justify-end pr-[10px]">
              {exp && (
                <svg width="8" height="14" viewBox="0 0 8 14" fill="none" stroke="#252423">
                  <path d="M.5.5 7.500 7 .5 13.500" />
                </svg>
              )}
            </div>
            <div className="w-[15px] h-[15px] bg-[#f3f2f1] border border-[#8a8886] rounded-[3px]" />
            <div className="ml-[11px] mr-[6px] flex justify-center">
              <FieldIcon k={k} />
            </div>
            {n}
          </div>
        ))}
      </div>
    </Panel>
  );
}

function RightRail() {
  return (
    <div className="w-[40px] bg-[#fbfbfb] border-l border-[#e1dfdd] flex flex-col items-center">
      <div className="w-full h-[41px] bg-[#e6e6e6] border-y border-[#555] flex items-center justify-center">
        <Cylinder size={28} strokeWidth={1} className="text-[#252423]" />
      </div>
      <div className="w-full h-[39px] bg-[#e6e6e6] border-b border-[#555] flex items-center justify-center">
        <svg width="24" height="24" viewBox="0 0 24 24" fill="none" stroke="#444" strokeWidth="1.100">
          <path d="M1 23V11h5v12zM6 23V2h6v21zM12 23V9h3" />
          <path d="M13 13c0-3 9-3 9 0v9c0 2-9 2-9 0z" stroke={OR} />
        </svg>
      </div>
      <div className="h-[42px] flex items-center">
        <svg width="24" height="26" viewBox="0 0 24 26" fill="none" stroke="#444" strokeWidth="1.100">
          <path d="M1 22V11h6M7 22V2h6v9M13 11h5" />
          <path d="M21 7 10 20c-2 0-4 2-4 4 3 1 6-1 7-3L23 9z" fill="#fff" stroke="#1f6fb2" strokeWidth="1.300" />
        </svg>
      </div>
      <div className="h-[34px] flex items-center">
        <CopilotMark id="cpr" size={23} />
      </div>
      <div className="h-[46px] flex items-center">
        <Plus size={39} strokeWidth={.8} className="text-[#252423]" />
      </div>
      <div className="mt-auto w-full h-[39px] border-t border-[#e1dfdd] flex items-center justify-center">
        <Settings size={29} strokeWidth={1} className="text-[#3b3a39]" />
      </div>
    </div>
  );
}

function StatusBar() {
  return (
    <div className="h-[30px] bg-[#f3f2f1] border-t border-[#e1dfdd] border-b-[1px] border-b-black flex items-center text-[14px] text-[#605e5c]">
      <div className="pl-[5px]">Page 1 of 1</div>
      <div className="ml-auto flex items-center">
        <div className="w-[5px] h-[2px] bg-[#605e5c]" />
        <div className="ml-[4px] w-[125px] h-[1px] bg-[#605e5c] flex items-center pl-[48px]">
          <div className="w-[5px] h-[13px] bg-[#605e5c] shrink-0" />
          <div className="ml-[9px] w-[1px] h-[7px] bg-[#605e5c] shrink-0" />
        </div>
        <Plus size={14} strokeWidth={2} className="ml-[6px] text-[#3a6ea5]" />
        <div className="ml-[15px]">83%</div>
        <svg width="20" height="16" viewBox="0 0 20 16" fill="none" stroke="#605e5c" strokeWidth="1.200" className="ml-[25px] mr-[22px]">
          <rect x=".6" y=".6" width="18.800" height="14.800" fill="#eaeaea" />
          <path d="M3 6V3h3M14 3h3v3M17 10v3h-3M6 13H3v-3" />
        </svg>
      </div>
    </div>
  );
}

function AppIcon({ children, active, dot }: { children: React.ReactNode; active?: boolean; dot?: boolean }) {
  return (
    <div className={active ? 'ml-[3px] w-[48px] h-[48px] flex items-center justify-center relative bg-[#f1f1ef] rounded-[5px]' : 'w-[55px] h-[48px] flex items-center justify-center relative'}>
      {children}
      {active && <div className="absolute bottom-[1px] w-[20px] h-[4px] rounded-full bg-[#0067c0]" />}
      {dot && <div className="absolute bottom-[1px] w-[7px] h-[4px] rounded-full bg-[#777]" />}
    </div>
  );
}

function Taskbar() {
  return (
    <div className="h-[60px] bg-gradient-to-r from-[#d6d6d3] via-[#e2e3dd] to-[#d6d6d4] flex items-center text-[#252423]">
      <div className="w-[447px] flex items-center pl-[25px]">
        <div className="relative w-[30px] h-[32px] mr-[9px]">
          <svg width="30" height="32" viewBox="0 0 30 32">
            <path d="M3 14a12 12 0 0 0 24 0z" transform="translate(0 4)" fill="#f0952a" />
            <path d="M6 14h16M2 20h20M6 26h14" stroke="#605e5c" strokeWidth="3" strokeLinecap="round" />
          </svg>
          <div className="absolute left-[13px] top-[-11px] w-[20px] h-[20px] rounded-full bg-[#c42b1c] text-white text-[13px] flex items-center justify-center">6</div>
        </div>
        <div className="text-[14px] leading-[20px]">
          <div>30°C</div>
          <div className="text-[#484644]">Haze</div>
        </div>
      </div>
      <svg width="30" height="30" viewBox="0 0 30 30">
        <defs>
          <linearGradient id="win" x1="0" y1="0" x2="1" y2="1">
            <stop offset="0" stopColor="#3fc1f8" />
            <stop offset="1" stopColor="#0a78d4" />
          </linearGradient>
        </defs>
        <path d="M0 1h14v13.500H0zM15.500 1H30v13.500H15.500zM0 16h14v14H0zM15.500 16H30v14H15.500z" fill="url(#win)" />
      </svg>
      <div className="ml-[16px] w-[273px] h-[38px] rounded-full bg-[#f5f5f3] border border-[#e3e3e0] flex items-center pl-[14px] text-[16px] text-[#5a5a5a]">
        <Search size={22} strokeWidth={2} className="text-[#222]" />
        <span className="ml-[10px]">Search</span>
        <svg width="58" height="32" viewBox="0 0 58 32" className="ml-auto mr-[5px]">
          <ellipse cx="30" cy="30" rx="28" ry="3" fill="#6ba32f" />
          <path d="M14 16c2-8 14-12 26-9 8 2 10 8 9 14l-1 8h-4l-1-7-14 1-1 7h-4l-1-8-4 1c-3 0-5-1-8-3-3 0-1-3 3-4z" fill="#8e7f86" />
          <ellipse cx="36" cy="12" rx="11" ry="6" fill="#b3a6ac" />
        </svg>
      </div>
      <div className="ml-[3px] flex items-center">
        <AppIcon>
          <svg width="30" height="26" viewBox="0 0 30 26">
            <path d="M1 2h11l3 4h14v19H1z" fill="#f5c33b" />
            <path d="M1 10h28v15H1z" fill="#fcdc6a" />
            <rect x="9" y="16" width="12" height="3" fill="#1478c8" />
          </svg>
        </AppIcon>
        <AppIcon><CopilotMark id="cpt" size={30} /></AppIcon>
        <AppIcon>
          <svg width="30" height="30" viewBox="0 0 30 30">
            <circle cx="21" cy="7" r="4" fill="#7b83eb" />
            <circle cx="12" cy="5" r="4.500" fill="#5059c9" />
            <rect x="16" y="12" width="13" height="13" rx="4" fill="#7b83eb" />
            <rect x="7" y="10" width="15" height="18" rx="3" fill="#6168d4" />
            <rect x="1" y="8" width="15" height="15" rx="2" fill="#4b53bc" />
            <text x="8.500" y="20" textAnchor="middle" fontSize="11" fontWeight="700" fill="#fff" fontFamily="Liberation Sans">T</text>
          </svg>
        </AppIcon>
        <AppIcon>
          <svg width="26" height="30" viewBox="0 0 26 30">
            <ellipse cx="13" cy="15" rx="10.500" ry="13" fill="none" stroke="#d0111b" strokeWidth="4.500" />
          </svg>
        </AppIcon>
        <AppIcon>
          <svg width="28" height="32" viewBox="0 0 28 32">
            <path d="M8 7V3c0-2 12-2 12 0v4" fill="none" stroke="#1aa5d8" strokeWidth="2" />
            <path d="M1 7h26v21c0 2-2 3-4 3H5c-2 0-4-1-4-3z" fill="#15497f" />
            <rect x="9" y="13" width="5" height="5" fill="#f25022" />
            <rect x="15" y="13" width="5" height="5" fill="#7fba00" />
            <rect x="9" y="19" width="5" height="5" fill="#00a4ef" />
            <rect x="15" y="19" width="5" height="5" fill="#ffb900" />
          </svg>
        </AppIcon>
        <AppIcon>
          <svg width="30" height="30" viewBox="0 0 30 30">
            <circle cx="15" cy="15" r="14" fill="#1a8fd8" />
            <path d="M1 17C3 6 18 2 26 9c4 5 2 12-5 12-5 0-7-3-5-7-6 0-10 4-7 11C5 23 2 21 1 17z" fill="#39c6a5" />
            <path d="M14 14c-5 3-6 10-1 14 7 3 13-1 15-6-4 3-12 3-14-8z" fill="#0c5aa6" />
          </svg>
        </AppIcon>
        <AppIcon>
          <svg width="30" height="30" viewBox="0 0 30 30">
            <circle cx="15" cy="17" r="13" fill="#ff8a2b" />
            <path d="M15 1c5 4 13 8 13 16 0 3-1 6-3 8-1-8-6-12-10-12 3-4 2-8 0-12z" fill="#f5463c" />
            <circle cx="15" cy="17" r="7" fill="#7b3fc9" />
          </svg>
        </AppIcon>
        <AppIcon>
          <div className="w-[30px] h-[30px] bg-white flex flex-col items-center">
            <span className="text-[23px] leading-[23px] text-[#9a9a9a] font-['Liberation_Sans']">a</span>
            <svg width="22" height="4" viewBox="0 0 22 4">
              <circle cx="2" cy="2" r="1.800" fill="#d83b3b" />
              <circle cx="8" cy="2" r="1.800" fill="#e0a020" />
              <circle cx="14" cy="2" r="1.800" fill="#3aa04a" />
              <circle cx="20" cy="2" r="1.800" fill="#2a7fcb" />
            </svg>
          </div>
        </AppIcon>
        <AppIcon>
          <svg width="30" height="30" viewBox="0 0 30 30" fill="#000">
            <path d="M8 1l7 5-7 5-7-5zM22 1l7 5-7 5-7-5zM8 11l7 5-7 5-7-5zM22 11l7 5-7 5-7-5zM15 19l7 5-7 5-7-5z" />
          </svg>
        </AppIcon>
        <AppIcon>
          <svg width="30" height="30" viewBox="0 0 30 30">
            <rect width="30" height="30" fill="#060a1c" />
            <circle cx="15" cy="15" r="8" fill="none" stroke="#e0417c" strokeWidth="2.500" strokeDasharray="18 8" />
            <circle cx="15" cy="15" r="5" fill="none" stroke="#2a8ad4" strokeWidth="2" strokeDasharray="12 6" />
          </svg>
        </AppIcon>
        <AppIcon>
          <svg width="30" height="34" viewBox="0 0 30 34">
            <rect width="30" height="34" fill="#b99a3e" />
            <rect x="3" y="3" width="14" height="22" fill="#f0ead2" transform="rotate(-8 10 14)" />
            <rect x="14" y="5" width="13" height="22" fill="#e6dfc2" transform="rotate(8 20 16)" />
            <path d="M9 9l2 10M18 10l3 10" stroke="#2f7f45" strokeWidth="3" />
          </svg>
        </AppIcon>
        <AppIcon dot>
          <svg width="31" height="31" viewBox="0 0 31 31">
            <circle cx="15.500" cy="15.500" r="15" fill="#dd4437" />
            <path d="M15.500 15.500 28.500 8a15 15 0 0 1-13 22.500z" fill="#fbbc04" />
            <path d="M15.500 15.500 15.500 30.500A15 15 0 0 1 2.500 8z" fill="#34a853" />
            <circle cx="15.500" cy="15.500" r="7" fill="#fff" />
            <circle cx="15.500" cy="15.500" r="5.500" fill="#4285f4" />
          </svg>
        </AppIcon>
        <AppIcon active>
          <svg width="30" height="30" viewBox="0 0 30 32" preserveAspectRatio="none">
            <rect width="30" height="32" fill="#0b63b0" />
            <rect x="15" y="0" width="15" height="32" fill="#d9a112" />
            <rect x="8" y="8" width="14" height="24" fill="#f0c930" />
            <rect x="3" y="16" width="10" height="16" fill="#f8e58a" />
          </svg>
        </AppIcon>
      </div>
      <div className="ml-auto flex items-center">
        <ChevronUp size={18} strokeWidth={2} />
        <div className="ml-[14px] w-[50px] text-center text-[14px] leading-[20px]">ENG<br />IN</div>
        <Wifi size={20} strokeWidth={1.700} className="ml-[12px]" />
        <Volume2 size={21} strokeWidth={1.400} className="ml-[10px]" />
        <BatteryMedium size={22} strokeWidth={1.600} className="ml-[9px]" />
        <div className="ml-[24px] text-right text-[14px] leading-[20px]">21:37<br />08-04-2025</div>
        <svg width="18" height="22" viewBox="0 0 18 22" className="ml-[10px] mr-[25px]" fill="#222">
          <path d="M9 4c-4 0-6 3-6 7 0 3-1 4-2 5h16c-1-1-2-2-2-5 0-4-2-7-6-7z" />
          <circle cx="9" cy="19" r="2" />
          <path d="M6 8h5l-5 5h5" stroke="#fff" strokeWidth="1.200" fill="none" />
        </svg>
      </div>
    </div>
  );
}

export default function App() {
  return (
    <div className="w-[1920px] h-[1080px] overflow-hidden flex flex-col font-['Noto_Sans',sans-serif]">
      <TitleBar />
      <Tabs />
      <Ribbon />
      <div className="h-[790px] flex">
        <LeftRail />
        <div className="w-[1377px] flex flex-col">
          <div className="h-[746px] flex bg-[#dcdad6]">
            <div className="w-[5px]" />
            <Canvas />
            <div className="w-[5px]" />
            <div className="w-[41px] bg-[#faf9f5] border-l border-[#c8c6c4] flex flex-col items-center text-[#252423]">
              <div className="mt-[16px]"><Chevs left /></div>
              <svg width="16" height="16" viewBox="0 0 16 16" fill="none" stroke="#252423" strokeWidth="1.300" className="mt-[18px]">
                <path d="M15 1 1 8l14 7-4-7z" />
              </svg>
              <div className="[writing-mode:vertical-rl] text-[18px] font-semibold mt-[9px] leading-[20px]">Filters</div>
            </div>
          </div>
          <PageTabs />
        </div>
        <Build />
        <DataPane />
        <RightRail />
      </div>
      <StatusBar />
      <Taskbar />
    </div>
  );
}
